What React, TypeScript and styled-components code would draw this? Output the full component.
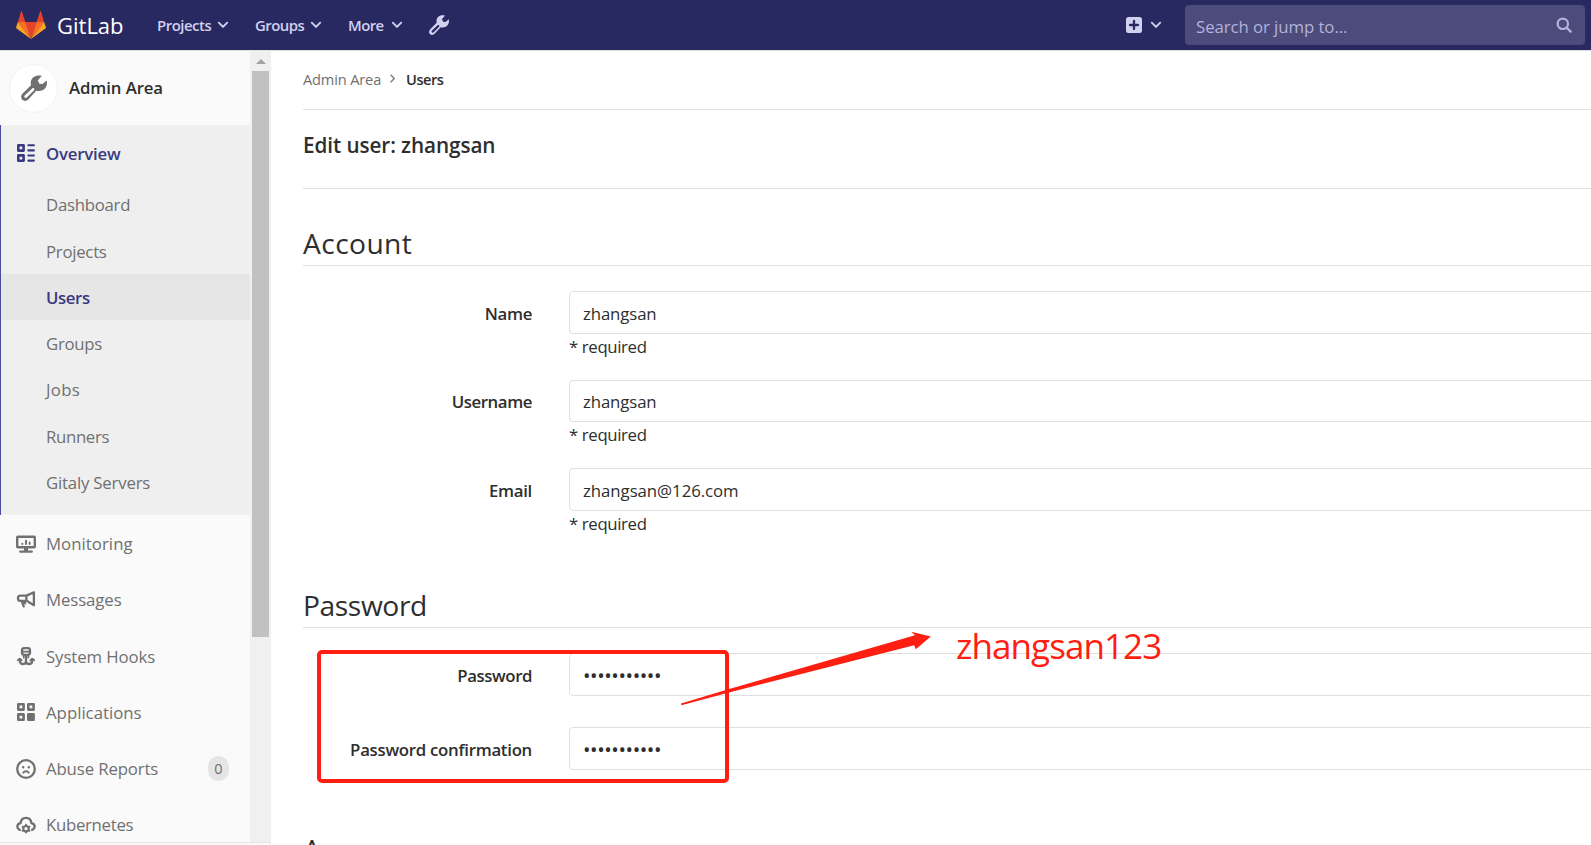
import React from "react";
import styled, { createGlobalStyle } from "styled-components";

const GlobalStyle = createGlobalStyle`
  *, *::before, *::after { box-sizing: border-box; }
  html, body { margin: 0; height: 100%; overflow: hidden; background: #fff; }
  body {
    font-family: "Open Sans", "Noto Sans", sans-serif;
    font-size: 16.8px;
    color: #2e2e2e;
  }
`;

const Page = styled.div`
  position: relative;
  display: flex;
  flex-direction: column;
  width: 1591px;
  height: 845px;
  overflow: hidden;
`;

const Text = styled.span<{ $ls?: number }>`
  white-space: nowrap;
  letter-spacing: ${(p) => p.$ls ?? 0}px;
`;

/* ---------- Top navigation ---------- */

const Header = styled.header`
  display: flex;
  align-items: center;
  flex: none;
  height: 51px;
  padding: 0 6px 1px 16px;
  background: #292961;
  border-bottom: 1px solid #dfdfe4;
  color: #d1d1f0;
`;

const Brand = styled.a`
  display: flex;
  align-items: center;
  width: 141px;
  gap: 11px;
  color: #fff;
  font-size: 22px;
`;

const NavItem = styled.a<{ $width: number }>`
  display: flex;
  align-items: center;
  justify-content: space-between;
  width: ${(p) => p.$width}px;
  margin-right: 26px;
  font-size: 14.9px;
  font-weight: 600;
`;

const NavIcons = styled.div`
  display: flex;
  align-items: center;
  gap: 8px;
  margin-left: auto;
  margin-right: 23px;
`;

const SearchBox = styled.div`
  display: flex;
  align-items: center;
  justify-content: space-between;
  width: 400px;
  height: 40px;
  padding: 3px 13px 0 11px;
  border-radius: 4px;
  background: #4c4b7c;
  color: #b3b3da;
  svg { margin-top: -3px; }
`;

/* ---------- Sidebar ---------- */

const Body = styled.div`
  display: flex;
  flex: 1;
  min-height: 0;
`;

const Side = styled.aside`
  display: flex;
  flex-direction: column;
  flex: none;
  width: 271px;
  background: #fafafa;
`;

const SideScroll = styled.div`
  display: flex;
  height: 791px;
  overflow: hidden;
`;

const SideFoot = styled.div`
  flex: 1;
  border-top: 1px solid #e3e3e3;
  border-right: 1px solid #e8e8e8;
`;

const SideNav = styled.nav`
  width: 250px;
  flex: none;
  color: #707070;
`;

const Context = styled.div`
  display: flex;
  align-items: center;
  height: 74px;
  padding: 0 0 1px 9px;
  gap: 11px;
  color: #2e2e2e;
  font-weight: 600;
`;

const Avatar = styled.div`
  display: flex;
  align-items: center;
  justify-content: center;
  width: 49px;
  height: 49px;
  margin-top: 1px;
  border: 1px solid #f2f2f2;
  border-radius: 50%;
  background: #fff;
  color: #707070;
`;

const Group = styled.div`
  height: 390.4px;
  background: #efefef;
  box-shadow: inset 1px 0 0 #4b4ba3;
`;

const SideItem = styled.a<{ $active?: boolean }>`
  display: flex;
  align-items: center;
  height: 56.25px;
  padding: 0 21px 0 16px;
  gap: 10px;
  color: ${(p) => (p.$active ? "#393982" : "#707070")};
  font-weight: ${(p) => (p.$active ? 600 : 400)};
  svg { flex: none; }
`;

const SubItem = styled.a<{ $active?: boolean }>`
  display: flex;
  align-items: center;
  height: 46.25px;
  margin-left: 1px;
  padding: 1px 0 0 45px;
  background: ${(p) => (p.$active ? "#e6e6e6" : "transparent")};
  color: ${(p) => (p.$active ? "#393982" : "#707070")};
  font-weight: ${(p) => (p.$active ? 600 : 400)};
`;

const Count = styled.span`
  display: flex;
  align-items: center;
  justify-content: center;
  width: 21px;
  height: 25px;
  margin-left: auto;
  border-radius: 11px;
  background: #e5e5e5;
  font-size: 14.5px;
`;

const Scrollbar = styled.div`
  display: flex;
  flex-direction: column;
  align-items: center;
  width: 21px;
  padding-top: 8px;
  background: #f0f0f0;
  svg { flex: none; }
`;

const Thumb = styled.div`
  width: 17px;
  height: 566px;
  margin-top: 7px;
  background: #c1c1c1;
`;

/* ---------- Main ---------- */

const Main = styled.main`
  flex: 1;
  min-width: 0;
  padding-left: 32px;
  overflow: hidden;
`;

const Breadcrumbs = styled.div`
  display: flex;
  align-items: center;
  height: 59px;
  padding-bottom: 3px;
  border-bottom: 1px solid #e1e1e1;
  font-size: 14.6px;
  color: #707070;
  svg { margin: 0 11px 0 9px; }
  b { font-weight: 600; color: #2e2e2e; }
`;

const PageTitle = styled.h3`
  display: flex;
  align-items: center;
  height: 79px;
  margin: 0;
  padding-bottom: 9px;
  border-bottom: 1px solid #e1e1e1;
  font-size: 20.7px;
  font-weight: 600;
`;

const Fieldset = styled.section<{ $height: number }>`
  height: ${(p) => p.$height}px;
`;

const Legend = styled.h2<{ $top: number }>`
  display: flex;
  align-items: flex-end;
  height: ${(p) => p.$top}px;
  margin: 0 0 25px;
  padding-bottom: 3px;
  border-bottom: 1px solid #e1e1e1;
  font-size: 28.2px;
  font-weight: 400;
  line-height: 38px;
`;

const Row = styled.div<{ $height: number }>`
  display: flex;
  width: 1500px;
  height: ${(p) => p.$height}px;
`;

const Label = styled.label`
  display: flex;
  align-items: center;
  justify-content: flex-end;
  width: 229px;
  height: 43px;
  padding-top: 1px;
  margin-right: 37px;
  font-weight: 600;
`;

const Control = styled.div`
  flex: 1;
`;

const Input = styled.input<{ $ls: number }>`
  display: block;
  width: 100%;
  height: 42.5px;
  padding: 2px 13px 0;
  border: 1px solid #dfdfdf;
  border-radius: 4px;
  outline: none;
  background: #fff;
  color: #2e2e2e;
  font: inherit;
  letter-spacing: ${(p) => p.$ls}px;
  &[type="password"] { font-size: 20px; }
`;

const Hint = styled.p`
  margin: -0.6px 0 0;
  line-height: 27px;
`;

/* ---------- Annotation ---------- */

const Frame = styled.div`
  position: absolute;
  left: 316.5px;
  top: 649.5px;
  width: 412px;
  height: 133px;
  border: 4px solid #ff1f12;
  border-radius: 5px;
`;

const Arrow = styled.svg`
  position: absolute;
  left: 680px;
  top: 630px;
`;

const Note = styled.div`
  position: absolute;
  left: 956px;
  top: 621px;
  color: #ff1f12;
  font-size: 35px;
  line-height: 50px;
`;

/* ---------- Icons ---------- */

const Tanuki = () => (
  <svg width="30" height="28" viewBox="0 0 30 28">
    <path fill="#e24329" d="M1.9 11 5 .4q.4-.7.9 0L9.4 11ZM28.1 11 25 .4q-.4-.7-.9 0L20.6 11ZM9.3 11h11.4L15 28Z" />
    <path fill="#fc6d26" d="M1.9 11h7.5L15 28ZM28.1 11h-7.5L15 28Z" />
    <path fill="#fca326" d="M1.9 11 .1 16.2q-.2.8.5 1.3L15 28ZM28.1 11l1.8 5.2q.2.8-.5 1.3L15 28Z" />
  </svg>
);

const Wrench = ({ size }: { size: number }) => (
  <svg width={size} height={size} viewBox="0 0 26 26">
    <path
      fill="currentColor"
      fillRule="evenodd"
      d="M20.8.8C15.800-.6 10.500 1.500 9.800 7c-.1 1.200 0 2.200.2 3.200L1.600 18.500c-2 2.200-1.900 4.800-.3 6.300 1.700 1.600 4.300 1.500 6-.3l7.900-8.700c3.600.8 7.200 0 9.400-3 1.300-2.100 1.700-4.900 1.200-7.200l-4.400 3.400-3-.3-1.600-3.300ZM3.700 20.500l7.500-7.100c1.300-1 2.900.6 1.900 1.900l-7.300 7.300c-1.500 1.300-3.400-.7-2.100-2.100Z"
    />
  </svg>
);

const Chevron = () => (
  <svg width="12" height="8" viewBox="0 0 12 8" fill="none" stroke="currentColor" strokeWidth="1.9" strokeLinecap="round" strokeLinejoin="round">
    <path d="M1.8 1.7 6 5.9l4.2-4.2" />
  </svg>
);

const CrumbArrow = () => (
  <svg width="5" height="9" viewBox="0 0 5 9" fill="none" stroke="#808080" strokeWidth="1.5">
    <path d="M.7.8 4.200 4.500.7 8.200" />
  </svg>
);

const PlusSquare = () => (
  <svg width="16" height="16" viewBox="0 0 16 16">
    <rect width="16" height="16" rx="2.5" fill="#d1d1f0" />
    <path d="M8 4v8M4 8h8" stroke="#292961" strokeWidth="2.3" strokeLinecap="round" />
  </svg>
);

const SearchIcon = () => (
  <svg width="16" height="16" viewBox="0 0 16 16" fill="none" stroke="currentColor">
    <circle cx="6.8" cy="6.8" r="5.2" strokeWidth="2.2" />
    <path d="m11 11 3.600 3.600" strokeWidth="2.4" strokeLinecap="round" />
  </svg>
);

const icon = {
  width: 20,
  height: 20,
  viewBox: "0 0 20 20",
  fill: "none",
  stroke: "currentColor",
  strokeLinecap: "round" as const,
  strokeLinejoin: "round" as const,
};

const OverviewIcon = () => (
  <svg {...icon} strokeWidth="2.6">
    <rect x="2.3" y="2.3" width="5.3" height="5.3" />
    <rect x="2.3" y="12.4" width="5.3" height="5.3" />
    <path strokeWidth="2.1" d="M12.300 2.300h5.600M12.300 7.400h5.600M12.300 12.500h5.600M12.300 17.600h5.600" />
  </svg>
);

const MonitorIcon = () => (
  <svg {...icon} strokeWidth="2.4">
    <rect x="1.2" y="2.7" width="17.6" height="10.6" rx=".8" />
    <path d="M4.300 17.600h11.400" />
    <path d="M10 14v3" strokeWidth="4" strokeLinecap="butt" />
    <path d="M6.300 9.700v.3M10 6.600V10M13.600 8.500V10" strokeWidth="1.9" />
  </svg>
);

const MessageIcon = () => (
  <svg {...icon} strokeWidth="2.3">
    <path d="M17.900 2.300 10.600 5.600H4.400a2.400 2.400 0 0 0-2.400 2.400v.4a2.400 2.400 0 0 0 2.400 2.400h6.200l7.300 4.400ZM10.400 5.800v5M5.700 11.200l2 5.200M8.200 11.200l.9 2.200" />
  </svg>
);

const HookIcon = () => (
  <svg {...icon} strokeWidth="2.3">
    <rect x="6" y="2.2" width="8" height="6.6" rx="2.2" />
    <path d="M6.500 5.600h7" strokeWidth="1.6" />
    <path d="M10 9.500v6.500M10 15.600c-.4 1.600-1.500 2.400-3 2.400-2 0-3.200-1.300-3.200-3.300v-1.500M10 15.600c.4 1.600 1.500 2.400 3 2.400 2 0 3.200-1.300 3.200-3.300v-1.500" />
    <path d="M7.700 9.500v2M12.300 9.500v2" strokeWidth="1.8" />
    <path d="M1.800 14.300l2-1.700 1.900 1.700M18.200 14.300l-2-1.700-1.900 1.700" strokeWidth="1.8" />
  </svg>
);

const AppsIcon = () => (
  <svg {...icon} strokeWidth="2.6">
    <rect x="2.3" y="2.3" width="5.3" height="5.3" />
    <rect x="12.3" y="2.3" width="5.3" height="5.3" />
    <rect x="2.3" y="12.4" width="5.3" height="5.3" />
    <rect x="12.3" y="12.4" width="5.3" height="5.3" fill="currentColor" />
  </svg>
);

const AbuseIcon = () => (
  <svg {...icon} strokeWidth="2.3">
    <circle cx="10" cy="10" r="8.8" />
    <path d="M7.200 8.100v.1M12.800 8.100v.1" strokeWidth="2.4" />
    <path d="M7.300 13.700c1-2 4.400-2 5.400 0" strokeWidth="1.9" />
  </svg>
);

const KubeIcon = () => (
  <svg {...icon} strokeWidth="2.3">
    <path d="M3.800 14.900C.4 13.300.5 8.700 4.600 8.100 5.300 1 14.700 1 15.400 8.100c4.100.6 4.200 5.200.8 6.800" />
    <circle cx="10" cy="13.7" r="2.7" strokeWidth="2.1" />
    <path strokeWidth="1.9" d="M10 10.300v-.5M10 17.600v-.4M7 12l-.5-.3M13 12l.5-.3M7 15.400l-.5.300M13 15.400l.5.300" />
  </svg>
);

/* ---------- Data ---------- */

const subItems = [
  { label: "Dashboard", ls: -0.27 },
  { label: "Projects", ls: -0.27 },
  { label: "Users", ls: -0.4, active: true },
  { label: "Groups", ls: -0.3 },
  { label: "Jobs", ls: 0.3 },
  { label: "Runners", ls: -0.35 },
  { label: "Gitaly Servers", ls: -0.2 },
];

const sideItems = [
  { label: "Monitoring", ls: 0.03, Icon: MonitorIcon },
  { label: "Messages", ls: -0.1, Icon: MessageIcon },
  { label: "System Hooks", ls: -0.1, Icon: HookIcon },
  { label: "Applications", ls: 0, Icon: AppsIcon },
  { label: "Abuse Reports", ls: -0.13, Icon: AbuseIcon, count: 0 },
  { label: "Kubernetes", ls: -0.3, Icon: KubeIcon },
];

const accountFields = [
  { label: "Name", value: "zhangsan", ls: -0.3, vls: -0.12, height: 88.5 },
  { label: "Username", value: "zhangsan", ls: -0.42, vls: -0.12, height: 88.5 },
  { label: "Email", value: "zhangsan@126.com", ls: -0.3, vls: -0.05, height: 88.5 },
];

const passwordFields = [
  { label: "Password", ls: -0.42 },
  { label: "Password confirmation", ls: -0.27 },
];

export default function App() {
  return (
    <>
      <GlobalStyle />
      <Page>
        <Header>
          <Brand>
            <Tanuki />
            <Text $ls={0}>GitLab</Text>
          </Brand>
          <NavItem $width={72}><Text $ls={-0.47}>Projects</Text><Chevron /></NavItem>
          <NavItem $width={67}><Text $ls={-0.5}>Groups</Text><Chevron /></NavItem>
          <NavItem $width={55}><Text $ls={-0.55}>More</Text><Chevron /></NavItem>
          <Wrench size={20} />
          <NavIcons><PlusSquare /><Chevron /></NavIcons>
          <SearchBox>
            <Text $ls={-0.07}>Search or jump to...</Text>
            <SearchIcon />
          </SearchBox>
        </Header>
        <Body>
          <Side>
            <SideScroll>
              <SideNav>
                <Context>
                  <Avatar><Wrench size={26} /></Avatar>
                  <Text $ls={-0.1}>Admin Area</Text>
                </Context>
                <Group>
                  <SideItem $active><OverviewIcon /><Text $ls={-0.2}>Overview</Text></SideItem>
                  {subItems.map((s) => (
                    <SubItem key={s.label} $active={s.active}>
                      <Text $ls={s.ls}>{s.label}</Text>
                    </SubItem>
                  ))}
                </Group>
                {sideItems.map(({ label, ls, Icon, count }) => (
                  <SideItem key={label}>
                    <Icon />
                    <Text $ls={ls}>{label}</Text>
                    {count !== undefined && <Count>{count}</Count>}
                  </SideItem>
                ))}
              </SideNav>
              <Scrollbar>
                <svg width="10" height="5" viewBox="0 0 10 5"><path d="M5 0 10 5H0Z" fill="#a3a3a3" /></svg>
                <Thumb />
              </Scrollbar>
            </SideScroll>
            <SideFoot />
          </Side>
          <Main>
            <Breadcrumbs>
              <Text $ls={-0.15}>Admin Area</Text>
              <CrumbArrow />
              <b><Text $ls={-0.5}>Users</Text></b>
            </Breadcrumbs>
            <PageTitle><Text $ls={-0.07}>Edit user: zhangsan</Text></PageTitle>
            <Fieldset $height={385}>
              <Legend $top={77}><Text $ls={0.4}>Account</Text></Legend>
              {accountFields.map((f) => (
                <Row key={f.label} $height={f.height}>
                  <Label><Text $ls={f.ls}>{f.label}</Text></Label>
                  <Control>
                    <Input $ls={f.vls} defaultValue={f.value} />
                    <Hint><Text $ls={-0.37}>* required</Text></Hint>
                  </Control>
                </Row>
              ))}
            </Fieldset>
            <Fieldset $height={220}>
              <Legend $top={54}><Text $ls={-0.4}>Password</Text></Legend>
              {passwordFields.map((f) => (
                <Row key={f.label} $height={74}>
                  <Label><Text $ls={f.ls}>{f.label}</Text></Label>
                  <Control>
                    <Input type="password" $ls={-0.43} defaultValue="zhangsan123" />
                  </Control>
                </Row>
              ))}
            </Fieldset>
            <Legend $top={78}>Access</Legend>
          </Main>
        </Body>
        <Frame />
        <Arrow width="254" height="78" viewBox="680 630 254 78">
          <path
            fill="#ff1f12"
            d="M681 703.6 730 688.800 915 635.300 911.200 631.700 930.800 636.400 915.800 649.300 914.200 645.200 730 692.300 681.400 705.200Z"
          />
        </Arrow>
        <Note><Text $ls={-0.92}>zhangsan123</Text></Note>
      </Page>
    </>
  );
}
